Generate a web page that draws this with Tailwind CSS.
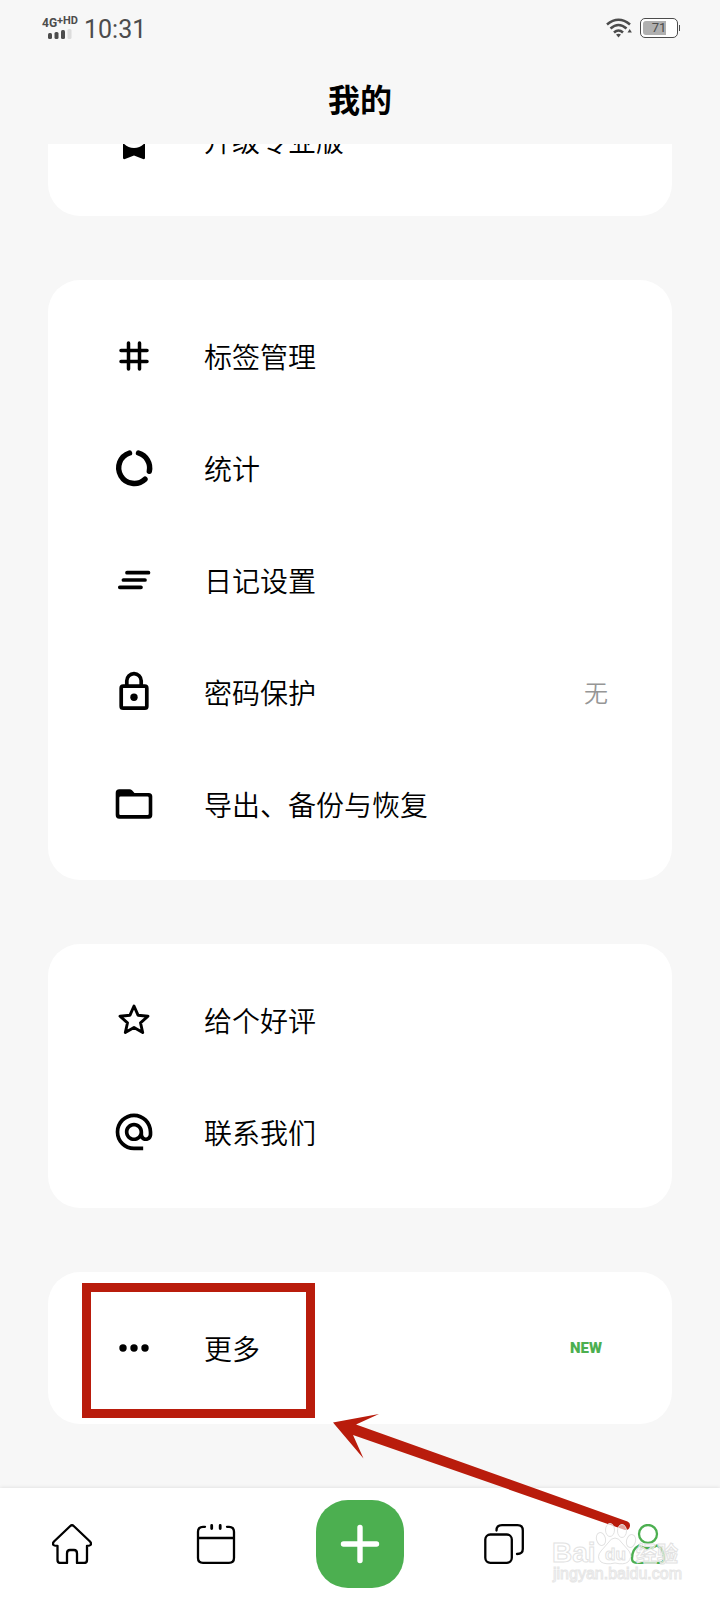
<!DOCTYPE html>
<html lang="zh-CN">
<head>
    <meta charset="UTF-8">
    <meta name="viewport" content="width=device-width, initial-scale=1.0">
    <title>我的</title>
    <script src="https://cdn.jsdelivr.net/npm/@tailwindcss/browser@4"></script>
</head>
<body class="bg-[#f7f7f7] text-black font-['Noto_Sans_CJK_SC',sans-serif]">
    <div class="relative flex flex-col h-screen overflow-hidden">

        <!-- status bar -->
        <div class="flex shrink-0 items-center justify-between h-14 px-10 text-[#4c4c4c] font-[Roboto,sans-serif]">
            <div class="flex items-center gap-1">
                <div class="flex flex-col items-center w-10">
                    <div class="flex items-start font-bold leading-3">
                        <span class="text-[12px]">4G</span>
                        <span class="text-[11px] leading-2">+HD</span>
                    </div>
                    <svg class="w-6 h-[10px]" viewBox="0 0 24 10" fill="currentColor">
                        <rect x="0" y="4" width="4" height="6" rx="1.5"/>
                        <rect x="6.5" y="3" width="4" height="7" rx="1.5"/>
                        <rect x="13" y="1" width="4" height="9" rx="1.5"/>
                        <rect x="19.5" y="0" width="4" height="10" rx="1.5" fill="#dcdcdc"/>
                    </svg>
                </div>
                <span class="pt-1 text-[25px] leading-8">10:31</span>
            </div>
            <div class="flex items-center gap-2">
                <svg class="w-[26px] h-5" viewBox="0 0 26 20" fill="none" stroke="currentColor" stroke-width="2.6">
                    <path d="M1 6.500Q12.500 -3 24 6.500"/>
                    <path d="M4.500 10.500Q12.500 3.500 20.500 10.500"/>
                    <path d="M8 14.500Q12.500 10.500 17 14.500"/>
                    <path d="M10 16.500Q12.500 15 15 16.500L12.500 19.500Z" fill="currentColor" stroke="none"/>
                    <path d="M21.500 14.500L23.700 11L25.900 14.500Z" fill="currentColor" stroke="none"/>
                </svg>
                <div class="flex items-center">
                    <div class="relative w-[38px] h-5 rounded-[5px] border border-[#4c4c4c] bg-white p-[2px]">
                        <div class="w-[23px] h-full bg-[#b0b0b0] rounded-l-[3px]"></div>
                        <span class="absolute inset-0 text-center text-[13px] leading-[18px]">71</span>
                    </div>
                    <div class="w-px h-1.5 ml-px bg-[#4c4c4c]"></div>
                </div>
            </div>
        </div>

        <header class="flex shrink-0 items-center justify-center h-[88px] pb-1">
            <h1 class="text-[32px] leading-10 font-bold">我的</h1>
        </header>

        <!-- list is scrolled to its end, so the first card is cut off by the header -->
        <main class="flex flex-col flex-1 min-h-0 justify-end gap-16 px-12 pb-16 overflow-hidden">
            <section class="shrink-0 bg-white rounded-[32px] py-5">
                <a href="#" class="flex items-center gap-12 h-28 px-16">
                    <svg class="w-11 h-11" viewBox="0 0 44 44">
                        <path d="M11 20H33V40Q33 41.500 31 41L22 37.500L13 41Q11 41.500 11 40Z"/>
                        <circle cx="22" cy="16" r="14" fill="#fff"/>
                        <circle cx="22" cy="15" r="10"/>
                    </svg>
                    <span class="text-[28px] leading-10 font-[350]">升级专业版</span>
                </a>
            </section>

            <section class="shrink-0 bg-white rounded-[32px] py-5">
                <a href="#" class="flex items-center gap-12 h-28 px-16">
                    <svg class="w-11 h-11" viewBox="0 0 44 44" fill="none" stroke="currentColor" stroke-width="3.5" stroke-linecap="round">
                        <path d="M16.500 9V35M27.500 9V35M9 16.500H35M9 27.500H35"/>
                    </svg>
                    <span class="text-[28px] leading-10 font-[350]">标签管理</span>
                </a>
                <a href="#" class="flex items-center gap-12 h-28 px-16">
                    <svg class="w-11 h-11" viewBox="0 0 44 44" fill="none" stroke="currentColor" stroke-width="5.4" stroke-linecap="round">
                        <path d="M26.500 7A15.600 15.600 0 0 1 37.300 25.300"/>
                        <path d="M17.500 7A15.600 15.600 0 1 0 33 33.200"/>
                    </svg>
                    <span class="text-[28px] leading-10 font-[350]">统计</span>
                </a>
                <a href="#" class="flex items-center gap-12 h-28 px-16">
                    <svg class="w-11 h-11" viewBox="0 0 44 44" fill="none" stroke="currentColor" stroke-width="3.7" stroke-linecap="round">
                        <path d="M15 14.700H36.500M11.400 22H33M7.800 29.300H29"/>
                    </svg>
                    <span class="text-[28px] leading-10 font-[350]">日记设置</span>
                </a>
                <a href="#" class="flex items-center gap-12 h-28 px-16">
                    <svg class="w-11 h-11" viewBox="0 0 44 44" fill="none" stroke="currentColor" stroke-width="3.7">
                        <rect x="9.200" y="16.200" width="25.600" height="22" rx="2"/>
                        <path d="M14.800 16V10.800A7.200 7.200 0 0 1 29.200 10.800V16"/>
                        <circle cx="22" cy="27.300" r="3.700" fill="currentColor" stroke="none"/>
                    </svg>
                    <span class="flex-1 text-[28px] leading-10 font-[350]">密码保护</span>
                    <span class="text-2xl font-[350] text-[#969696]">无</span>
                </a>
                <a href="#" class="flex items-center gap-12 h-28 px-16">
                    <svg class="w-11 h-11" viewBox="0 0 44 44" fill-rule="evenodd">
                        <path d="M7.300 7.300H17.500Q19 7.300 20 8.300L22.500 11H36.700Q40.300 11 40.300 14.600V33Q40.300 36.700 36.700 36.700H7.300Q3.700 36.700 3.700 33V11Q3.700 7.300 7.300 7.300ZM8.500 14.500Q7.300 14.500 7.300 15.700V31.900Q7.300 33 8.500 33H35.500Q36.700 33 36.700 31.900V15.700Q36.700 14.500 35.500 14.500Z"/>
                    </svg>
                    <span class="text-[28px] leading-10 font-[350]">导出、备份与恢复</span>
                </a>
            </section>

            <section class="shrink-0 bg-white rounded-[32px] py-5">
                <a href="#" class="flex items-center gap-12 h-28 px-16">
                    <svg class="w-11 h-11" viewBox="0 0 44 44" fill="none" stroke="currentColor" stroke-width="2.9" stroke-linejoin="round">
                        <path d="M22 8L26 17.200L36 18.200L28.500 24.800L30.700 34.600L22 29.500L13.300 34.600L15.500 24.800L8 18.200L18 17.200Z"/>
                    </svg>
                    <span class="text-[28px] leading-10 font-[350]">给个好评</span>
                </a>
                <a href="#" class="flex items-center gap-12 h-28 px-16">
                    <svg class="w-11 h-11" viewBox="0 0 24 24">
                        <path d="M12 1.950c-5.520 0-10 4.480-10 10s4.480 10 10 10h5v-2h-5c-4.340 0-8-3.660-8-8s3.660-8 8-8 8 3.660 8 8v1.430c0 .790-.710 1.570-1.500 1.570s-1.500-.780-1.500-1.570v-1.430c0-2.760-2.240-5-5-5s-5 2.240-5 5 2.240 5 5 5c1.380 0 2.640-.560 3.540-1.470.650.890 1.770 1.470 2.960 1.470 1.970 0 3.500-1.600 3.500-3.570v-1.430c0-5.520-4.480-10-10-10zm0 13c-1.660 0-3-1.340-3-3s1.340-3 3-3 3 1.340 3 3-1.340 3-3 3z"/>
                    </svg>
                    <span class="text-[28px] leading-10 font-[350]">联系我们</span>
                </a>
            </section>

            <section class="relative shrink-0 bg-white rounded-[32px] py-5">
                <a href="#" class="flex items-center gap-12 h-28 px-16">
                    <svg class="w-11 h-11" viewBox="0 0 44 44">
                        <circle cx="11" cy="22" r="3.700"/>
                        <circle cx="22" cy="22" r="3.700"/>
                        <circle cx="33" cy="22" r="3.700"/>
                    </svg>
                    <span class="flex-1 text-[28px] leading-10 font-[350]">更多</span>
                    <span class="mr-1.5 text-[15px] font-black text-[#4caf50] font-[Roboto,sans-serif]">NEW</span>
                </a>
                <div class="absolute left-[34px] top-[11px] w-[233px] h-[135px] border-[9px] border-[#b91c0c]"></div>
            </section>
        </main>

        <nav class="grid grid-cols-5 shrink-0 place-items-center h-28 bg-white shadow-[0_0_4px_rgba(0,0,0,0.12)]">
            <a href="#" aria-label="首页">
                <svg class="w-10 h-10" viewBox="0 0 40 40" fill="none" stroke="currentColor" stroke-width="2.3" stroke-linejoin="round">
                    <path d="M18.300 2Q20 .400 21.700 2L38 17.500Q39.800 19.500 38.500 21Q38 21.800 35 21.800V36Q35 39 32 39H25V29.500Q25 26 22 26H18Q15 26 15 29.500V39H8.500Q5.500 39 5.500 36V21.800Q2 21.800 1.500 21Q.200 19.500 2 17.500Z"/>
                </svg>
            </a>
            <a href="#" aria-label="日历">
                <svg class="w-10 h-10" viewBox="0 0 40 40" fill="none" stroke="currentColor" stroke-width="2.3" stroke-linecap="round">
                    <path d="M9 2.800H7Q2 2.800 2 7.800V34Q2 38.800 7 38.800H33Q38 38.800 38 34V7.800Q38 2.800 33 2.800H31M2 14H38"/>
                    <path d="M15.700 1.500V4.500M24.200 1.500V4.500" stroke-width="2.8"/>
                </svg>
            </a>
            <button type="button" aria-label="新建" class="flex items-center justify-center w-[88px] h-[88px] rounded-[32px] bg-[#4caf50] text-white">
                <svg class="w-10 h-10" viewBox="0 0 40 40" fill="none" stroke="currentColor" stroke-width="5.4" stroke-linecap="round">
                    <path d="M20 3.500V36.500M3.500 20H36.500"/>
                </svg>
            </button>
            <a href="#" aria-label="卡片">
                <svg class="w-10 h-10" viewBox="0 0 40 40" fill="none" stroke="currentColor" stroke-width="2.3" stroke-linecap="round">
                    <rect x="1.300" y="10.500" width="26.500" height="28.300" rx="5"/>
                    <path d="M12.500 6.500Q12.500 1.200 18 1.200H33.500Q38.800 1.200 38.800 6.500V25Q38.800 30 33 30"/>
                </svg>
            </a>
            <a href="#" aria-label="我的" class="text-[#4caf50]">
                <svg class="w-10 h-10" viewBox="0 0 40 40" fill="none" stroke="currentColor" stroke-width="2.3" stroke-linecap="round">
                    <circle cx="20" cy="10" r="9"/>
                    <path d="M11 21.500Q4 25 4 34.500Q4 38.800 8.500 38.800H31Q36 38.800 36 34.500Q36 25 29 21.500Q20 27 11 21.500Z"/>
                </svg>
            </a>
        </nav>

        <!-- arrow and watermark lie over the list and the tab bar -->
        <svg class="absolute right-0 bottom-0 w-[400px] h-[200px] pointer-events-none" viewBox="0 0 400 200">
            <path fill="#b91c0c" d="M13 22.500L59 14L36 24.500L307.500 121.500A4.500 4.500 0 0 1 305 130L33 35L43.500 58.500Z"/>
            <g fill="#fff" fill-opacity=".6" stroke="#e2e2e2" stroke-width="1">
                <ellipse cx="281" cy="139" rx="4.500" ry="6.500" transform="rotate(-15 281 139)"/>
                <ellipse cx="290" cy="130" rx="4.500" ry="6.500"/>
                <ellipse cx="302" cy="131" rx="4.500" ry="6.500"/>
                <ellipse cx="311" cy="141" rx="4.500" ry="6.500" transform="rotate(15 311 141)"/>
                <path d="M295 138Q299 138 302 143L309 151Q313 157 308 162Q304 165 295 163Q286 165 281 162Q276 157 281 151L288 143Q291 138 295 138Z"/>
                <text x="232" y="162" font-family="Liberation Sans, sans-serif" font-weight="bold" font-size="28">Bai</text>
                <text x="285" y="160" font-family="Liberation Sans, sans-serif" font-weight="bold" font-size="17">du</text>
                <text x="316" y="161" font-family="Noto Sans CJK SC, sans-serif" font-weight="bold" font-size="21">经验</text>
            </g>
            <text x="233" y="179" font-family="Liberation Sans, sans-serif" font-size="16" fill="#fff" stroke="#e6e6e6" stroke-width="1">jingyan.baidu.com</text>
        </svg>
    </div>
</body>
</html>
